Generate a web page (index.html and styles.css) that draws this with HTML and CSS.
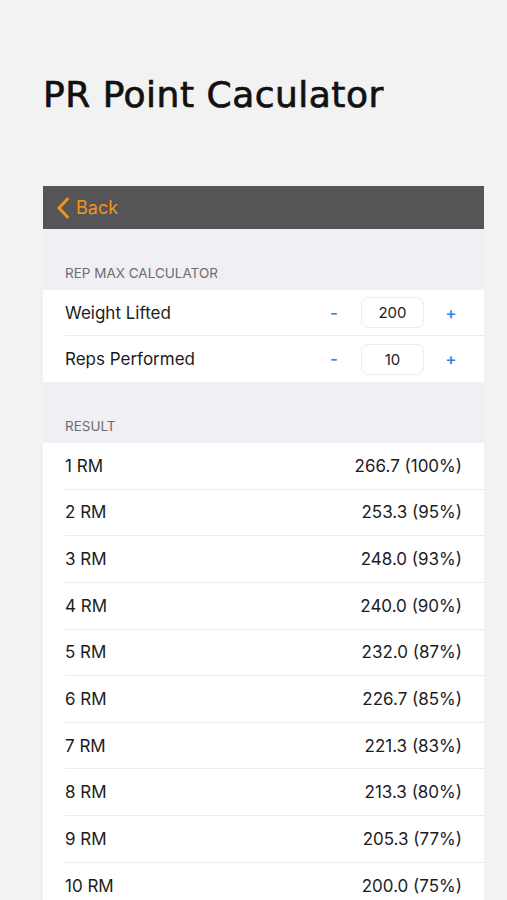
FILE: index.html
```html
<!DOCTYPE html>
<html>
<head>
    <title>PR Point Caculator</title>
    <meta name="viewport" content="width=device-width, initial-scale=1.0">
    <link rel="stylesheet" href="styles.css">
</head>
<body>
    <h1 class="title">PR Point Caculator</h1>

    <div class="panel">
        <div class="nav-bar">
            <a class="back" href="#">
                <svg class="chevron" width="14" height="22" viewBox="0 0 14 22">
                    <path d="M11.5 2 L3 11 L11.5 20" fill="none" stroke="#f0931c" stroke-width="3" stroke-linecap="round" stroke-linejoin="round"/>
                </svg>
                <span>Back</span>
            </a>
        </div>

        <div class="section-header">REP MAX CALCULATOR</div>
        <div class="group">
            <div class="row">
                <span class="label">Weight Lifted</span>
                <div class="stepper">
                    <button class="step">-</button>
                    <div class="value-box">200</div>
                    <button class="step">+</button>
                </div>
            </div>
            <div class="row">
                <span class="label">Reps Performed</span>
                <div class="stepper">
                    <button class="step">-</button>
                    <div class="value-box">10</div>
                    <button class="step">+</button>
                </div>
            </div>
        </div>

        <div class="section-header">RESULT</div>
        <div class="group results">
            <div class="row"><span class="label">1 RM</span><span class="detail">266.7 (100%)</span></div>
            <div class="row"><span class="label">2 RM</span><span class="detail">253.3 (95%)</span></div>
            <div class="row"><span class="label">3 RM</span><span class="detail">248.0 (93%)</span></div>
            <div class="row"><span class="label">4 RM</span><span class="detail">240.0 (90%)</span></div>
            <div class="row"><span class="label">5 RM</span><span class="detail">232.0 (87%)</span></div>
            <div class="row"><span class="label">6 RM</span><span class="detail">226.7 (85%)</span></div>
            <div class="row"><span class="label">7 RM</span><span class="detail">221.3 (83%)</span></div>
            <div class="row"><span class="label">8 RM</span><span class="detail">213.3 (80%)</span></div>
            <div class="row"><span class="label">9 RM</span><span class="detail">205.3 (77%)</span></div>
            <div class="row"><span class="label">10 RM</span><span class="detail">200.0 (75%)</span></div>
        </div>
    </div>
</body>
</html>
```

FILE: styles.css
```css
body {
    font-family: Inter, "Noto Sans", sans-serif;
    background-color: #f2f2f2;
    color: #1c1c1e;
    margin: 0;
    padding: 0;
}
.title {
    font-family: "DejaVu Sans", sans-serif;
    font-weight: normal;
    font-size: 36px;
    letter-spacing: 0.5px;
    -webkit-text-stroke: 0.7px #111;
    color: #111;
    margin: 0;
    padding: 74px 0 0 43px;
    height: 112px;
}
.panel {
    margin-left: 43px;
    width: 441px;
    background-color: #efeff4;
}
.nav-bar {
    height: 43px;
    background-color: #555557;
    display: flex;
    align-items: center;
    padding-left: 13px;
}
.back {
    display: flex;
    align-items: center;
    gap: 6px;
    color: #f0931c;
    text-decoration: none;
    font-size: 18px;
}
.section-header {
    height: 61px;
    box-sizing: border-box;
    display: flex;
    align-items: flex-end;
    padding: 0 0 9px 22px;
    font-size: 13.5px;
    color: #6d6d72;
}
.group {
    background-color: #fff;
}
.row {
    height: 46px;
    display: flex;
    align-items: center;
    justify-content: space-between;
    margin-left: 22px;
    padding-right: 22px;
    border-bottom: 1px solid #ececee;
    box-sizing: border-box;
    font-size: 17px;
}
.row:last-child {
    border-bottom: none;
}
.group .stepper {
    margin-right: -4px;
}
.results .row {
    height: 46.65px;
}
.results .row:last-child {
    border-bottom: 1px solid #ececee;
}
.stepper {
    display: flex;
    align-items: center;
}
.step {
    background: none;
    border: none;
    color: #2a84ec;
    font-size: 17px;
    font-weight: 500;
    font-family: inherit;
    width: 30px;
    padding: 0;
    cursor: pointer;
}
.value-box {
    width: 63px;
    height: 31px;
    box-sizing: border-box;
    border: 1px solid #ececec;
    border-radius: 7px;
    display: flex;
    align-items: center;
    justify-content: center;
    font-size: 15px;
    margin: 0 12px;
}
.detail {
    color: #1c1c1e;
}
```
